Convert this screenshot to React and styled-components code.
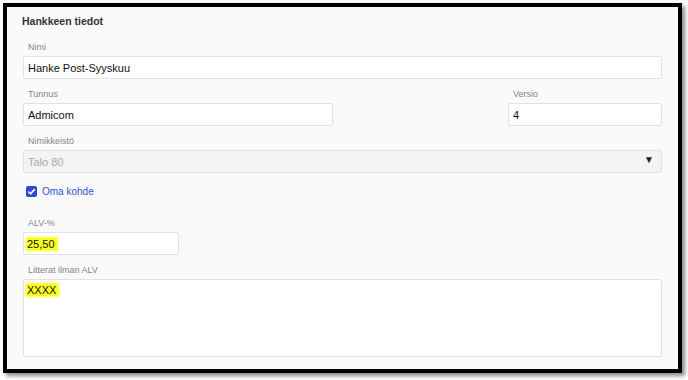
import React from "react";
import styled, { createGlobalStyle } from "styled-components";

const GlobalStyle = createGlobalStyle`
  html, body {
    margin: 0;
    padding: 0;
    background: #ffffff;
  }
  body {
    font-family: "Liberation Sans", Arial, sans-serif;
  }
`;

const Page = styled.div`
  width: 688px;
  height: 380px;
  padding: 3px 0 0 3px;
  box-sizing: border-box;
`;

const Frame = styled.div`
  width: 679px;
  height: 370px;
  box-sizing: border-box;
  border: 4px solid #000;
  box-shadow: 3px 3px 4px rgba(0, 0, 0, 0.45);
  background: #fafafa;
  padding: 7px 16px 0 16px;
  overflow: hidden;
`;

const Title = styled.h2`
  margin: 0 0 0 -1px;
  font-size: 10.5px;
  font-weight: bold;
  color: #333;
  line-height: 14px;
`;

const Field = styled.div`
  display: flex;
  flex-direction: column;
  margin-top: ${(p) => p.$top || 9}px;
`;

const Label = styled.label`
  font-size: 9px;
  color: #858585;
  padding-left: 5px;
  line-height: 12px;
  margin-bottom: 3px;
`;

const Input = styled.div`
  height: 23px;
  box-sizing: border-box;
  border: 1px solid #e2e2e2;
  border-radius: 2px;
  background: ${(p) => (p.$disabled ? "#f3f3f3" : "#fff")};
  color: ${(p) => (p.$disabled ? "#aaa" : "#111")};
  font-size: 11px;
  padding: 0 4px;
  display: flex;
  align-items: center;
  justify-content: space-between;
  width: ${(p) => p.$width || "auto"};
`;

const TextArea = styled(Input)`
  height: 78px;
  align-items: flex-start;
  padding-top: 4px;
`;

const Row = styled.div`
  display: grid;
  grid-template-columns: 310px 1fr 154px;
`;

const Mark = styled.span`
  background: #fbff20;
  box-shadow: 0 0 2px 1px #fbff20;
  padding: 0 2px 0 0;
  margin-left: -1px;
`;

const Arrow = styled.span`
  font-size: 10px;
  color: #222;
  margin-right: 3px;
  margin-top: -5px;
`;

const CheckRow = styled.div`
  display: flex;
  align-items: center;
  gap: 5px;
  margin-top: 13px;
  padding-left: 3px;
  color: #3550d8;
  font-size: 10px;
`;

const Box = styled.span`
  width: 11px;
  height: 11px;
  border-radius: 2px;
  background: #2b48d6;
  display: flex;
  align-items: center;
  justify-content: center;
`;

export default function App() {
  return (
    <>
      <GlobalStyle />
      <Page>
        <Frame>
          <Title>Hankkeen tiedot</Title>
          <Field $top={13}>
            <Label>Nimi</Label>
            <Input>Hanke Post-Syyskuu</Input>
          </Field>
          <Row>
            <Field>
              <Label>Tunnus</Label>
              <Input>Admicom</Input>
            </Field>
            <div />
            <Field>
              <Label>Versio</Label>
              <Input>4</Input>
            </Field>
          </Row>
          <Field>
            <Label>Nimikkeistö</Label>
            <Input $disabled>
              Talo 80
              <Arrow>▼</Arrow>
            </Input>
          </Field>
          <CheckRow>
            <Box>
              <svg width="9" height="9" viewBox="0 0 10 10">
                <path d="M1.5 5.2 L4 7.6 L8.6 2.4" fill="none" stroke="#fff" strokeWidth="1.8" />
              </svg>
            </Box>
            Oma kohde
          </CheckRow>
          <Field $top={20}>
            <Label>ALV-%</Label>
            <Input $width="156px">
              <Mark>25,50</Mark>
            </Input>
          </Field>
          <Field>
            <Label>Litterat ilman ALV</Label>
            <TextArea>
              <Mark>XXXX</Mark>
            </TextArea>
          </Field>
        </Frame>
      </Page>
    </>
  );
}
